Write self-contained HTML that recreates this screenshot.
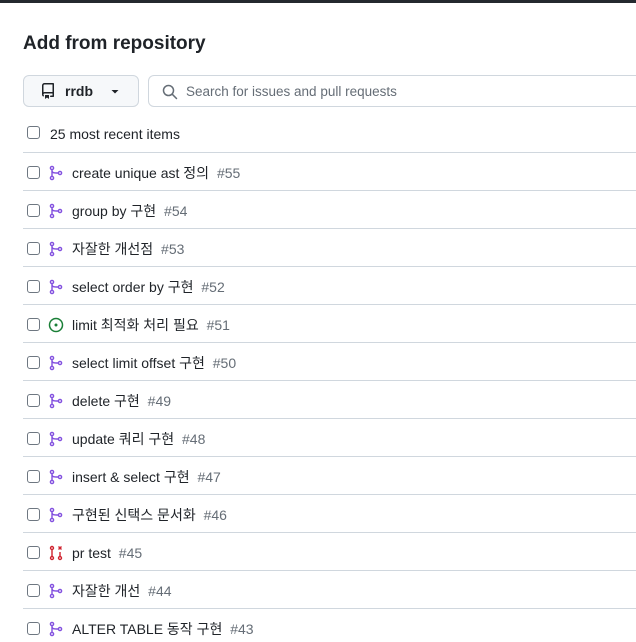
<!DOCTYPE html>
<html><head><meta charset="utf-8"><style>
body{margin:0;width:636px;height:642px;overflow:hidden;background:#fff;font-family:"Liberation Sans","Noto Sans CJK KR",sans-serif;color:#1f2328;position:relative}
.top{position:absolute;left:0;top:0;width:636px;height:3px;background:#24292f}
h1{position:absolute;left:23px;top:31px;margin:0;font-size:19px;font-weight:600;line-height:26px}
.btn{position:absolute;left:23px;top:75px;width:114px;height:30px;border:1px solid #d0d7de;border-radius:6px;background:#f6f8fa}
.btn .t{position:absolute;left:41px;top:7px;font-size:14px;font-weight:600}
.search{position:absolute;left:148px;top:75px;width:500px;height:30px;border:1px solid #d0d7de;border-radius:6px}
.search .t{position:absolute;left:37px;top:8px;font-size:13.5px;color:#656d76}
.cb{position:absolute;left:27px;width:11px;height:11px;border:1px solid #6e7781;border-radius:3px;background:#fff}
.row{position:absolute;left:0;width:636px;height:38px}
.sep{position:absolute;left:23px;width:613px;height:1px;background:#d0d7de}
.lbl{position:absolute;left:72px;font-size:14px;line-height:16px;white-space:nowrap}
.num{color:#656d76;margin-left:4px}
svg.ic{position:absolute;left:48px}
</style></head><body>
<div class="top"></div>
<h1>Add from repository</h1>
<div class="btn">
<svg style="position:absolute;left:16px;top:7px" width="16" height="16" viewBox="0 0 16 16"><path fill="#1f2328" d="M2 2.5A2.5 2.5 0 0 1 4.5 0h8.75a.75.75 0 0 1 .75.75v12.5a.75.75 0 0 1-.75.75h-2.5a.75.75 0 0 1 0-1.5h1.75v-2h-8a1 1 0 0 0-.71 1.71.75.75 0 0 1-1.06 1.06A2.5 2.5 0 0 1 2 11.5Zm10.5-1h-8a1 1 0 0 0-1 1v6.710A2.5 2.5 0 0 1 4.5 9h8ZM5 12.25a.25.25 0 0 1 .25-.25h3.5a.25.25 0 0 1 .25.25v3.25a.25.25 0 0 1-.4.2l-1.45-1.09a.25.25 0 0 0-.3 0L5.4 15.7a.25.25 0 0 1-.4-.2Z"/></svg>
<span class="t">rrdb</span>
<svg style="position:absolute;left:87px;top:14px" width="8" height="5"><path d="M0.5 0h7L4 3.5z" fill="#1f2328"/></svg>
</div>
<div class="search">
<svg style="position:absolute;left:13px;top:8px" width="16" height="16" viewBox="0 0 16 16"><circle cx="6.5" cy="6.5" r="5" fill="none" stroke="#656d76" stroke-width="1.5"/><path d="M10.2 10.2l4.3 4.3" stroke="#656d76" stroke-width="1.5" stroke-linecap="round"/></svg>
<span class="t">Search for issues and pull requests</span>
</div>
<div class="cb" style="top:126px"></div>
<div class="lbl" style="left:50px;top:126px">25 most recent items</div>
<div id="rows"></div>
<script>
var items=[["p","create unique ast 정의","#55"],["p","group by 구현","#54"],["p","자잘한 개선점","#53"],["p","select order by 구현","#52"],["i","limit 최적화 처리 필요","#51"],["p","select limit offset 구현","#50"],["p","delete 구현","#49"],["p","update 쿼리 구현","#48"],["p","insert &amp; select 구현","#47"],["p","구현된 신택스 문서화","#46"],["c","pr test","#45"],["p","자잘한 개선","#44"],["p","ALTER TABLE 동작 구현","#43"]];
var h="";
items.forEach(function(it,i){
 var c=173+38*i, s=152+38*i;
 h+='<div class="sep" style="top:'+s+'px"></div>';
 h+='<div class="cb" style="top:'+(c-7)+'px"></div>';
 var ic;
 if(it[0]=="p") ic='<svg class="ic" style="top:'+(c-8)+'px" width="16" height="16" viewBox="0 0 16 16"><circle cx="4" cy="3" r="1.6" fill="none" stroke="#8250df" stroke-width="1.4"/><circle cx="4" cy="13" r="1.6" fill="none" stroke="#8250df" stroke-width="1.4"/><circle cx="12" cy="8" r="1.6" fill="none" stroke="#8250df" stroke-width="1.4"/><path d="M4 4.6v6.8M4 5.5c0 2.5 2 2.5 6.4 2.5" fill="none" stroke="#8250df" stroke-width="1.4"/></svg>';
 else if(it[0]=="i") ic='<svg class="ic" style="top:'+(c-8)+'px" width="16" height="16" viewBox="0 0 16 16"><circle cx="8" cy="8" r="6.5" fill="none" stroke="#1a7f37" stroke-width="1.5"/><circle cx="8" cy="8" r="1.5" fill="#1a7f37"/></svg>';
 else ic='<svg class="ic" style="top:'+(c-8)+'px" width="16" height="16" viewBox="0 0 16 16"><circle cx="4" cy="3" r="1.5" fill="none" stroke="#cf222e" stroke-width="1.4"/><circle cx="4" cy="13" r="1.5" fill="none" stroke="#cf222e" stroke-width="1.4"/><circle cx="12" cy="13" r="1.5" fill="none" stroke="#cf222e" stroke-width="1.4"/><path d="M4 4.5v7M12 7v4.5M10.5 1.5l3 3M13.5 1.5l-3 3" stroke="#cf222e" stroke-width="1.4"/></svg>';
 h+=ic;
 h+='<div class="lbl" style="top:'+(c-8)+'px">'+it[1]+'<span class="num"> '+it[2]+'</span></div>';
});
document.getElementById("rows").innerHTML=h;
</script>
</body></html>
